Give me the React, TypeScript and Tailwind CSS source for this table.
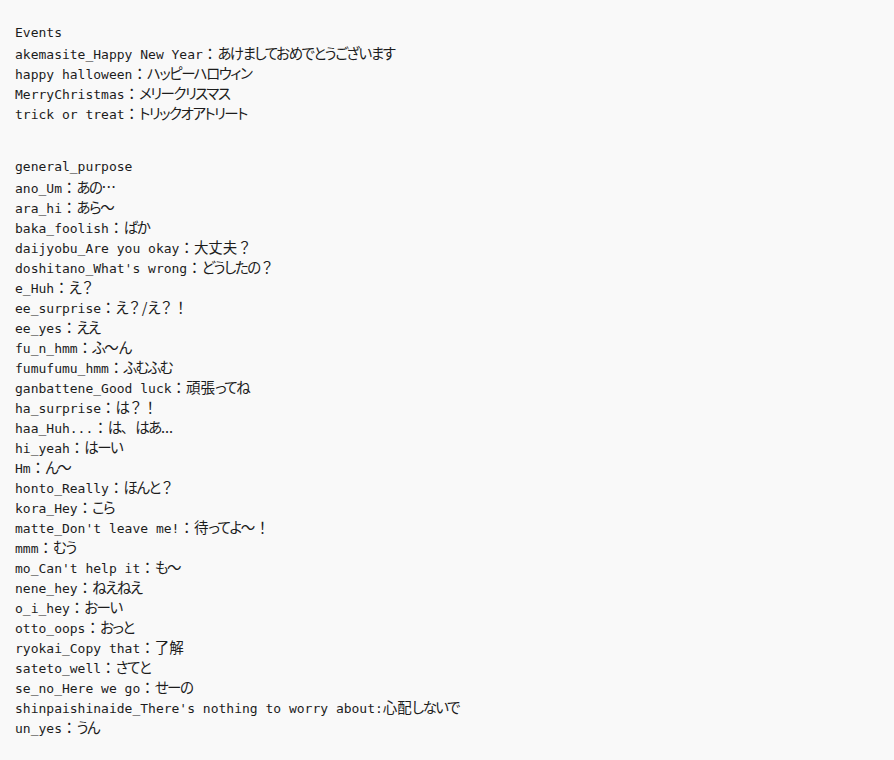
import React from 'react';

type Phrase = { key: string; sep: string; text: string };

const events: Phrase[] = [
  { key: 'akemasite_Happy New Year', sep: '：', text: 'あけましておめでとうございます' },
  { key: 'happy halloween', sep: '：', text: 'ハッピーハロウィン' },
  { key: 'MerryChristmas', sep: '：', text: 'メリークリスマス' },
  { key: 'trick or treat', sep: '：', text: 'トリックオアトリート' },
];

const general: Phrase[] = [
  { key: 'ano_Um', sep: '：', text: 'あの…' },
  { key: 'ara_hi', sep: '：', text: 'あら〜' },
  { key: 'baka_foolish', sep: '：', text: 'ばか' },
  { key: 'daijyobu_Are you okay', sep: '：', text: '大丈夫？' },
  { key: "doshitano_What's wrong", sep: '：', text: 'どうしたの？' },
  { key: 'e_Huh', sep: '：', text: 'え？' },
  { key: 'ee_surprise', sep: '：', text: 'え？/え？！' },
  { key: 'ee_yes', sep: '：', text: 'ええ' },
  { key: 'fu_n_hmm', sep: '：', text: 'ふ〜ん' },
  { key: 'fumufumu_hmm', sep: '：', text: 'ふむふむ' },
  { key: 'ganbattene_Good luck', sep: '：', text: '頑張ってね' },
  { key: 'ha_surprise', sep: '：', text: 'は？！' },
  { key: 'haa_Huh...', sep: '：', text: 'は、はあ...' },
  { key: 'hi_yeah', sep: '：', text: 'はーい' },
  { key: 'Hm', sep: '：', text: 'ん〜' },
  { key: 'honto_Really', sep: '：', text: 'ほんと？' },
  { key: 'kora_Hey', sep: '：', text: 'こら' },
  { key: "matte_Don't leave me!", sep: '：', text: '待ってよ〜！' },
  { key: 'mmm', sep: '：', text: 'むう' },
  { key: "mo_Can't help it", sep: '：', text: 'も〜' },
  { key: 'nene_hey', sep: '：', text: 'ねえねえ' },
  { key: 'o_i_hey', sep: '：', text: 'おーい' },
  { key: 'otto_oops', sep: '：', text: 'おっと' },
  { key: 'ryokai_Copy that', sep: '：', text: '了解' },
  { key: 'sateto_well', sep: '：', text: 'さてと' },
  { key: 'se_no_Here we go', sep: '：', text: 'せーの' },
  { key: "shinpaishinaide_There's nothing to worry about", sep: ':', text: '心配しないで' },
  { key: 'un_yes', sep: '：', text: 'うん' },
];

const mono = "font-['DejaVu_Sans_Mono','Liberation_Mono',monospace] text-[13px]";
const jp = "font-['Noto_Sans_CJK_JP',sans-serif] text-[14.5px]";

// kana are set narrower (proportional) than kanji and punctuation
const isKana = (c: string) => /[\u3041-\u309f\u30a1-\u30fa\u30fc]/.test(c);

function splitRuns(text: string) {
  const runs: { kana: boolean; s: string }[] = [];
  for (const c of text) {
    const k = isKana(c);
    const last = runs[runs.length - 1];
    if (last && last.kana === k) last.s += c;
    else runs.push({ kana: k, s: c });
  }
  return runs;
}

const Line: React.FC<{ p: Phrase }> = ({ p }) => (
  <div className="h-5 leading-5 whitespace-pre">
    <span className={mono}>{p.key}</span>
    {p.sep === ':' ? (
      <span className={mono}>:</span>
    ) : (
      <span className={jp}>{p.sep}</span>
    )}
    <span className={jp}>
      {splitRuns(p.text).map((r, i) =>
        r.kana ? (
          <span key={i} className="[font-feature-settings:'palt'] tracking-[-1.5px]">
            {r.s}
          </span>
        ) : (
          <span key={i}>{r.s}</span>
        )
      )}
    </span>
  </div>
);

export default function App() {
  return (
    <div className="min-h-[760px] w-[894px] bg-[#f9f9f9] text-[#1c1c1c] pl-[15px] pt-[23px]">
      <div className={`h-5 leading-5 ${mono}`}>Events</div>
      {events.map((p) => (
        <Line key={p.key} p={p} />
      ))}
      <div className="mt-[34px]">
        <div className={`h-5 leading-5 ${mono}`}>general_purpose</div>
        {general.map((p) => (
          <Line key={p.key} p={p} />
        ))}
      </div>
    </div>
  );
}
